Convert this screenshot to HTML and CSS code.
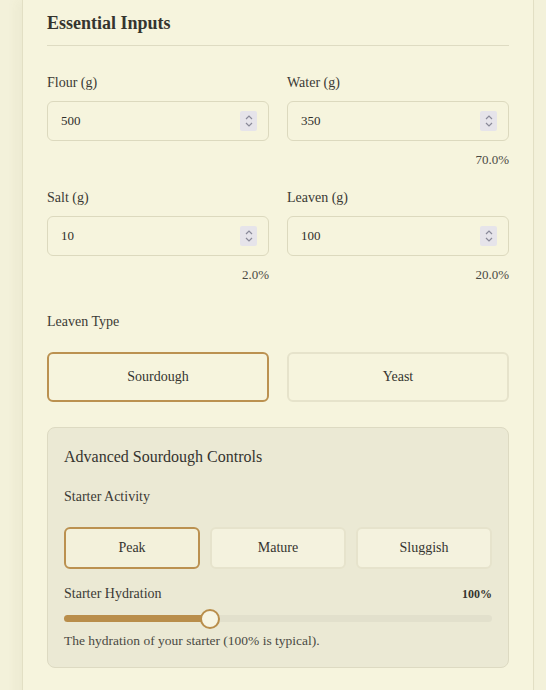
FILE: index.html
```html
<!DOCTYPE html>
<html>
<head>
<meta charset="utf-8">
<link rel="stylesheet" href="styles.css">
</head>
<body>
<div class="page">
  <section class="card">
    <h2 class="title">Essential Inputs</h2>
    <div class="grid">
      <div class="field">
        <label class="label">Flour (g)</label>
        <div class="input"><span>500</span><span class="spin"><svg width="10" height="14" viewBox="0 0 10 14"><path d="M2 5 L5 2 L8 5 M2 9 L5 12 L8 9" fill="none" stroke="#8a8a99" stroke-width="1.2"/></svg></span></div>
      </div>
      <div class="field">
        <label class="label">Water (g)</label>
        <div class="input"><span>350</span><span class="spin"><svg width="10" height="14" viewBox="0 0 10 14"><path d="M2 5 L5 2 L8 5 M2 9 L5 12 L8 9" fill="none" stroke="#8a8a99" stroke-width="1.2"/></svg></span></div>
        <div class="pct">70.0%</div>
      </div>
      <div class="field">
        <label class="label">Salt (g)</label>
        <div class="input"><span>10</span><span class="spin"><svg width="10" height="14" viewBox="0 0 10 14"><path d="M2 5 L5 2 L8 5 M2 9 L5 12 L8 9" fill="none" stroke="#8a8a99" stroke-width="1.2"/></svg></span></div>
        <div class="pct">2.0%</div>
      </div>
      <div class="field">
        <label class="label">Leaven (g)</label>
        <div class="input"><span>100</span><span class="spin"><svg width="10" height="14" viewBox="0 0 10 14"><path d="M2 5 L5 2 L8 5 M2 9 L5 12 L8 9" fill="none" stroke="#8a8a99" stroke-width="1.2"/></svg></span></div>
        <div class="pct">20.0%</div>
      </div>
    </div>
    <div class="label type-label">Leaven Type</div>
    <div class="choices two">
      <button class="choice active">Sourdough</button>
      <button class="choice">Yeast</button>
    </div>
    <div class="panel">
      <h3 class="panel-title">Advanced Sourdough Controls</h3>
      <div class="label act-label">Starter Activity</div>
      <div class="choices three">
        <button class="choice small active">Peak</button>
        <button class="choice small">Mature</button>
        <button class="choice small">Sluggish</button>
      </div>
      <div class="slider-head">
        <span class="label">Starter Hydration</span>
        <span class="value">100%</span>
      </div>
      <div class="slider">
        <div class="fill" style="width: 34%"></div>
        <div class="thumb" style="left: 34%"></div>
      </div>
      <p class="help">The hydration of your starter (100% is typical).</p>
    </div>
  </section>
</div>
</body>
</html>
```

FILE: styles.css
```css
* { box-sizing: border-box; }
html, body { margin: 0; padding: 0; }
body {
  background: #f3f1da;
  font-family: "Liberation Serif", "DejaVu Serif", serif;
  color: #3b3a35;
}
.page {
  padding: 0 12px 0 22px;
  height: 690px;
  overflow: hidden;
}
.card {
  background: #f6f4dd;
  border-left: 1px solid #e2dfc4;
  border-right: 1px solid #e2dfc4;
  box-shadow: -6px 0 10px rgba(120, 110, 60, 0.05);
  padding: 13px 24px 40px 24px;
}
.title {
  margin: 0;
  font-size: 18px;
  font-weight: bold;
  color: #35342f;
  padding-bottom: 11px;
  border-bottom: 1px solid #dedbc2;
}
.grid {
  display: grid;
  grid-template-columns: 1fr 1fr;
  column-gap: 18px;
  margin-top: 28px;
}
.field { display: flex; flex-direction: column; }
.label {
  font-size: 14px;
  color: #3b3a35;
}
.field .label { margin-bottom: 9px; line-height: 18px; }
.input {
  height: 40px;
  border: 1px solid #dcd9be;
  border-radius: 6px;
  background: #f6f4dd;
  display: flex;
  align-items: center;
  justify-content: space-between;
  padding: 0 11px 0 13px;
  font-size: 13px;
  color: #2f2e2a;
}
.spin {
  width: 17px;
  height: 20px;
  background: #e6e4ea;
  border-radius: 2px;
  display: flex;
  align-items: center;
  justify-content: center;
}
.pct {
  text-align: right;
  font-size: 13px;
  color: #4a4943;
  margin-top: 11px;
  line-height: 16px;
  margin-bottom: 21px;
}
.type-label { margin-top: 9px; line-height: 18px; }
.choices { display: grid; }
.choices.two { grid-template-columns: 1fr 1fr; column-gap: 18px; margin-top: 21px; }
.choices.three { grid-template-columns: 1fr 1fr 1fr; column-gap: 10px; margin-top: 21px; }
.choice {
  font-family: inherit;
  height: 50px;
  background: #f6f4dd;
  border: 2px solid #e6e3cb;
  border-radius: 6px;
  font-size: 14px;
  color: #35342f;
  padding: 0;
}
.choice.active { border-color: #bb9150; }
.choice.small { height: 42px; background: #f4f2de; border-color: #e6e3cc; }
.choice.small.active { border-color: #bb9150; background: #f3f1db; }
.panel {
  margin-top: 25px;
  background: #ebe9d4;
  border: 1px solid #dddac2;
  border-radius: 8px;
  padding: 19px 16px 18px 16px;
}
.panel-title {
  margin: 0;
  font-size: 16px;
  font-weight: normal;
  color: #35342f;
  line-height: 20px;
}
.act-label { margin-top: 21px; line-height: 18px; }
.slider-head {
  display: flex;
  justify-content: space-between;
  align-items: baseline;
  margin-top: 16px;
  line-height: 18px;
}
.value { font-size: 12px; font-weight: bold; color: #35342f; }
.slider {
  position: relative;
  height: 7px;
  margin-top: 12px;
  background: #e2e0cc;
  border-radius: 4px;
}
.fill {
  position: absolute;
  left: 0; top: 0; bottom: 0;
  background: #b98e4b;
  border-radius: 4px;
}
.thumb {
  position: absolute;
  top: 50%;
  width: 20px;
  height: 20px;
  margin: -10px 0 0 -10px;
  border-radius: 50%;
  background: #f7f5e3;
  border: 2px solid #b98e4b;
}
.help {
  margin: 11px 0 0 0;
  font-size: 13.5px;
  color: #4a4943;
  line-height: 16px;
}
```
